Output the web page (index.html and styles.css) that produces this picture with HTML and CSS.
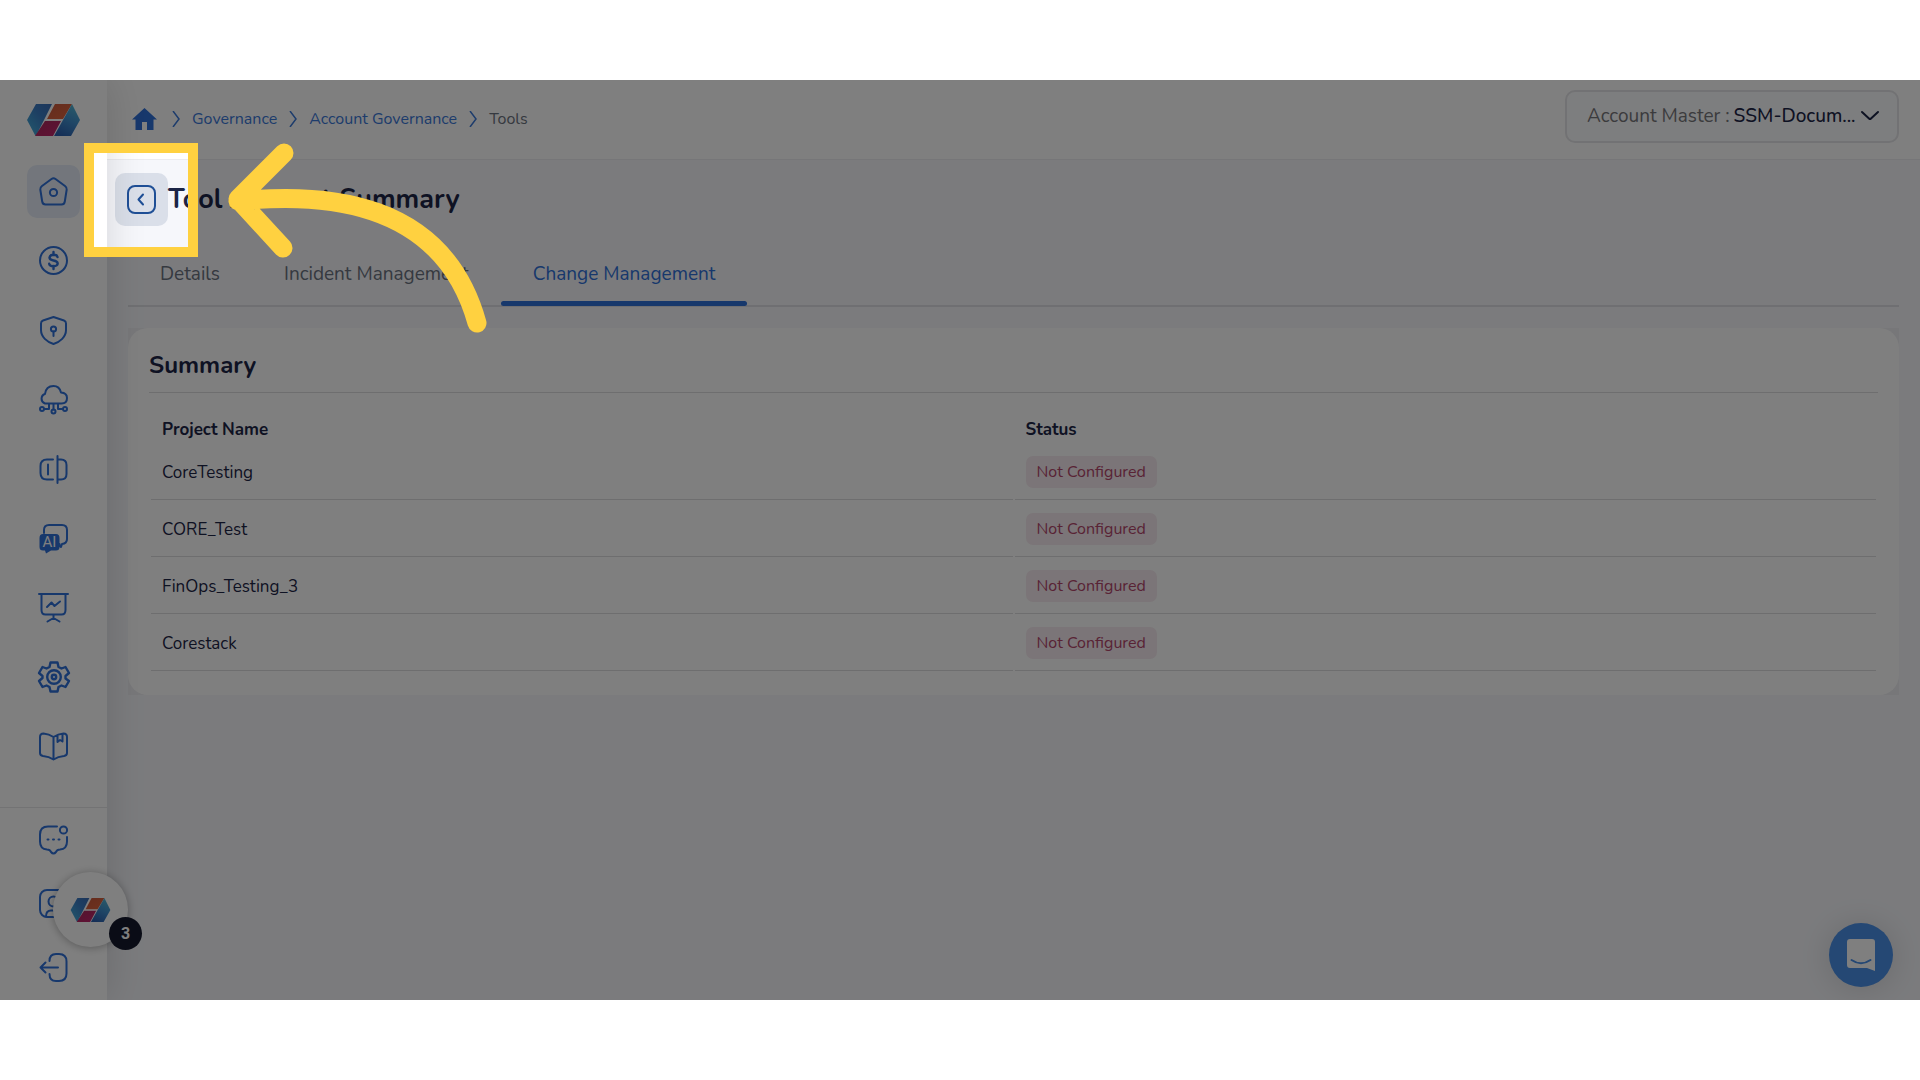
FILE: index.html
```
<!DOCTYPE html>
<html lang="en">
<head>
    <meta charset="UTF-8">
    <meta name="viewport" content="width=device-width, initial-scale=1.0">
    <title>Tool Account Summary</title>
    <link rel="stylesheet" href="styles.css">
</head>
<body>
    <!-- Shared logo -->
    <svg class="defs" width="0" height="0" aria-hidden="true">
        <defs>
            <linearGradient id="logo-left" x1="0" y1="1" x2="1" y2="0">
                <stop offset="0" stop-color="#46b4dc"/>
                <stop offset="0.6" stop-color="#3a7cc4"/>
                <stop offset="1" stop-color="#3a6cb4"/>
            </linearGradient>
            <linearGradient id="logo-right" x1="0.7" y1="0" x2="0.3" y2="1">
                <stop offset="0" stop-color="#52b4d2"/>
                <stop offset="0.5" stop-color="#3f8ccc"/>
                <stop offset="1" stop-color="#2c5fae"/>
            </linearGradient>
            <linearGradient id="logo-top" x1="0" y1="0" x2="1" y2="1">
                <stop offset="0" stop-color="#c8583c"/>
                <stop offset="1" stop-color="#e0653c"/>
            </linearGradient>
            <linearGradient id="logo-bottom" x1="0" y1="0" x2="1" y2="1">
                <stop offset="0" stop-color="#a62a5a"/>
                <stop offset="1" stop-color="#c4246e"/>
            </linearGradient>
            <symbol id="logo" viewBox="0 0 53 32">
                <path d="M9 0h16L9 32 8 31 0 16z" fill="url(#logo-left)"/>
                <path d="M28 0h17l-9 15H20z" fill="url(#logo-top)"/>
                <path d="M18 17h16l-8 15H8z" fill="url(#logo-bottom)"/>
                <path d="M45 0l8 16-9 16H27z" fill="url(#logo-right)"/>
            </symbol>
        </defs>
    </svg>

    <div class="screen">
        <aside class="sidebar">
            <a class="brand" href="#" aria-label="Home page"><svg class="logo"><use href="#logo"/></svg></a>
            <nav class="nav">
                <a class="nav-link active" href="#" aria-label="Dashboard">
                    <svg class="icon" viewBox="0 0 29 29"><path d="M12.500 2 3 9Q1 10.500 1.300 12.500L3.200 24.500Q3.700 27.500 6.500 27.500H22.500Q25.300 27.500 25.800 24.500L27.700 12.500Q28 10.500 26 9L16.500 2Q14.500 .5 12.500 2z"/><circle cx="14.500" cy="15.500" r="3.600"/></svg>
                </a>
                <a class="nav-link" href="#" aria-label="Cost">
                    <svg class="icon" viewBox="0 0 29 29"><circle cx="14.500" cy="14.500" r="13.500"/><path class="thick" d="M18.500 11Q18 8.800 14.500 8.800T10.500 11.500Q10.500 13.800 14.500 14.500T18.700 17.500Q18.500 20.200 14.500 20.200T10.200 17.800M14.500 6v3M14.500 20v3"/></svg>
                </a>
                <a class="nav-link" href="#" aria-label="Security">
                    <svg class="icon" viewBox="0 0 29 29"><path d="M14.500 1 25 4.500Q27 5.200 27 7.500V14C27 21 21 26 14.500 28C8 26 2 21 2 14V7.500Q2 5.200 4 4.500z"/><circle cx="14.500" cy="13" r="2.600"/><path d="M14.500 15.500V20"/></svg>
                </a>
                <a class="nav-link" href="#" aria-label="Cloud operations">
                    <svg class="icon" viewBox="0 0 29 29"><path d="M6 18.500A5 5 0 0 1 6 9Q7 1 14.500 1Q20.500 1 22 7.500Q28 8 28 13Q28 18.500 22.500 18.500zM10 18.500V24H5.500M19 18.500V24H23.500M14.500 18.500V24.500"/><circle cx="3" cy="24" r="2"/><circle cx="26" cy="24" r="2"/><circle cx="14.500" cy="26.500" r="2"/></svg>
                </a>
                <a class="nav-link" href="#" aria-label="Compare">
                    <svg class="icon" viewBox="0 0 29 29"><path d="M14 4.500H8Q1.500 4.500 1.500 11V18Q1.500 24.500 8 24.500H14M18.500 1V28M18.500 4.500H22Q27.500 4.500 27.500 10V19Q27.500 24.500 22 24.500H18.500M9 9.500V19.500"/></svg>
                </a>
                <a class="nav-link" href="#" aria-label="AI assistant">
                    <svg class="icon" viewBox="0 0 29 29"><path d="M5 9V6Q5 1 10 1H23Q28 1 28 6V15Q28 19.500 23 20L22 23Q20.500 22.500 20.500 20"/><path class="solid" d="M4 10H17Q20.500 10 20.500 14V23Q20.500 26.500 17 26.500H12L7 29.500 6 26.500H4Q.5 26.500 .5 23V14Q.5 10 4 10z"/><text class="ai-text" x="10.500" y="23" text-anchor="middle">AI</text></svg>
                </a>
                <a class="nav-link" href="#" aria-label="Reports">
                    <svg class="icon" viewBox="0 0 29 29"><path d="M0 1H29M2.500 1V17Q2.500 21.500 6.500 21.500H22.500Q26.500 21.500 26.500 17V1M8 14 12.500 9.500 15.500 13 21 8.500M14.500 21.500V25M8.500 28.500 14.500 25 20.500 28.500"/></svg>
                </a>
                <a class="nav-link" href="#" aria-label="Settings">
                    <svg class="icon large" viewBox="0 0 32 32"><path class="thick" d="M12.500 1.500H19.500L20.500 6 23.500 7.500 27.500 6 31 12 27.500 15V17.500L31 20 27.500 26 23.500 24.500 20.500 26 19.500 30.500H12.500L11.500 26 8.500 24.500 4.500 26 1 20 4.500 17V15L1 12 4.500 6 8.500 7.500 11.500 6z"/><circle class="thick" cx="16" cy="16" r="6.800"/><circle class="thick" cx="16" cy="16" r="2.200"/></svg>
                </a>
                <a class="nav-link" href="#" aria-label="Documentation">
                    <svg class="icon" viewBox="0 0 29 29"><path d="M14.500 5Q10 2 4.500 1.500Q1 1.500 1 5V21Q1 23.500 4 24Q10 24.500 14.500 27.500Q19 24.500 25 24Q28 23.500 28 21V5Q28 1.500 24.500 1.500Q19 2 14.500 5zV27.500M18.500 3.500V10L21 8 23.500 9.500V2"/></svg>
                </a>
            </nav>
            <div class="nav-bottom">
                <a class="nav-small" href="#" aria-label="Messages">
                    <svg class="icon" viewBox="0 0 29 29"><path d="M18 1.500H9Q1 1.500 1 9.500V16.500Q1 24 8 24.500Q11 24.500 12 27Q14.500 30 17 27Q18 24.500 21 24.500Q28 24 28 16.500V12"/><circle cx="24.500" cy="5" r="3.600"/><path d="M8.500 14.500h1M14 14.500h1M19.500 14.500h1"/></svg>
                </a>
                <a class="nav-small" href="#" aria-label="Profile">
                    <svg class="icon" viewBox="0 0 29 29"><rect x="1" y="1" width="27" height="27" rx="7"/><circle cx="14.500" cy="12.500" r="5"/><path d="M7 27.500Q7 21.500 12 21.500H17Q22 21.500 22 27.500"/></svg>
                </a>
                <a class="nav-small" href="#" aria-label="Log out">
                    <svg class="icon" viewBox="0 0 29 29"><path d="M10.500 8Q10.500 1 17 1H20Q27.500 1 27.500 8.500V20.500Q27.500 28 20 28H17Q10.500 28 10.500 21M19 14.500H1.500M6.500 9.500 1.500 14.500 6.500 19.500"/></svg>
                </a>
            </div>
        </aside>

        <div class="main">
            <header class="topbar">
                <nav class="breadcrumb" aria-label="Breadcrumb">
                    <a class="home" href="#" aria-label="Home"><svg width="25" height="22" viewBox="0 0 25 22"><path d="M12.500 0 25 11.500H21.500V22H15V14H10V22H3.500V11.500H0z"/></svg></a>
                    <svg class="chevron" viewBox="0 0 8 16"><path d="M1 0 7 8 1 16"/></svg>
                    <a href="#">Governance</a>
                    <svg class="chevron" viewBox="0 0 8 16"><path d="M1 0 7 8 1 16"/></svg>
                    <a href="#">Account Governance</a>
                    <svg class="chevron" viewBox="0 0 8 16"><path d="M1 0 7 8 1 16"/></svg>
                    <span>Tools</span>
                </nav>
                <div class="account">
                    <label for="account">Account Master :</label>
                    <select id="account">
                        <option>SSM-Docum...</option>
                    </select>
                    <svg class="caret" viewBox="0 0 16 9"><path d="M0 1 7 7.500Q8 8.500 9 7.500L16 1"/></svg>
                </div>
            </header>

            <main class="content">
                <div class="title-row">
                    <button class="back" type="button" aria-label="Back">
                        <svg class="icon" viewBox="0 0 29 29"><rect x="1" y="1" width="27" height="27" rx="7"/><path d="M16 9.500 11.500 14.500 16 19.500"/></svg>
                    </button>
                    <h1>Tool Account Summary</h1>
                </div>
                <div class="tabs" role="tablist">
                    <button class="tab" type="button" role="tab">Details</button>
                    <button class="tab" type="button" role="tab">Incident Management</button>
                    <button class="tab selected" type="button" role="tab" aria-selected="true">Change Management</button>
                </div>
                <div class="card-wrap">
                    <section class="card">
                        <h2>Summary</h2>
                        <table>
                            <thead>
                                <tr><th>Project Name</th><th>Status</th></tr>
                            </thead>
                            <tbody>
                                <tr><td>CoreTesting</td><td><span class="status">Not Configured</span></td></tr>
                                <tr><td>CORE_Test</td><td><span class="status">Not Configured</span></td></tr>
                                <tr><td>FinOps_Testing_3</td><td><span class="status">Not Configured</span></td></tr>
                                <tr><td>Corestack</td><td><span class="status">Not Configured</span></td></tr>
                            </tbody>
                        </table>
                    </section>
                </div>
            </main>
        </div>

        <!-- Floating widgets -->
        <button class="guide" type="button" aria-label="Open guide">
            <svg class="guide-logo"><use href="#logo"/></svg>
            <span class="guide-count">3</span>
        </button>
        <button class="chat" type="button" aria-label="Open chat">
            <svg width="28" height="32" viewBox="0 0 28 32"><path class="bubble" d="M3 0H25Q28 0 28 3V32L20 29H3Q0 29 0 26V3Q0 0 3 0z"/><path class="smile" d="M4.500 21Q14 27.500 23.500 21"/></svg>
        </button>

        <!-- Walkthrough highlight -->
        <div class="spotlight"></div>
        <svg class="arrow" width="270" height="200" viewBox="0 0 270 200"><path d="M64 13 18 59 63 108M18 61C105 52 223 60 257 183"/></svg>
    </div>
</body>
</html>
```
FILE: styles.css
```
* {
    box-sizing: border-box;
}
body {
    margin: 0;
    background: #fff;
    color: #1c2546;
    font-family: Nunito, Lato, "Open Sans", sans-serif;
    font-size: 16px;
}
a {
    color: #3b78d8;
    text-decoration: none;
}
button, select {
    font-family: inherit;
    border: 0;
    padding: 0;
    cursor: pointer;
}
.defs {
    position: absolute;
}
.screen {
    position: relative;
    display: flex;
    min-height: calc(100vh - 160px);
    margin: 80px 0;
    overflow: hidden;
    background: #f6f7fb;
}

/* Sidebar */
.sidebar {
    position: relative;
    z-index: 1;
    display: flex;
    flex-direction: column;
    flex: 0 0 107px;
    background: #fff;
    box-shadow: 0 0 40px rgba(0, 0, 0, 0.14);
}
.brand {
    display: flex;
    justify-content: center;
    padding: 24px 0 29px;
}
.logo {
    width: 53px;
    height: 32px;
}
.nav {
    display: flex;
    flex: 1;
    flex-direction: column;
    align-items: center;
    justify-content: space-between;
    padding-bottom: 34px;
}
.nav-link {
    display: flex;
    align-items: center;
    justify-content: center;
    width: 53px;
    height: 53px;
    border-radius: 10px;
}
.nav-link.active {
    background: #e6edf8;
}
.icon {
    width: 29px;
    height: 29px;
    overflow: visible;
    fill: none;
    stroke: #2f70d8;
    stroke-width: 2;
    stroke-linecap: round;
    stroke-linejoin: round;
}
.icon.large {
    width: 32px;
    height: 32px;
}
.icon .thick {
    stroke-width: 2.4;
}
.icon .solid {
    fill: #2f70d8;
    stroke: none;
}
.ai-text {
    fill: #fff;
    stroke: none;
    font-family: Roboto, sans-serif;
    font-size: 15px;
}
.nav-bottom {
    display: flex;
    flex-direction: column;
    align-items: center;
    height: 193px;
    padding-top: 17px;
    gap: 35px;
    border-top: 1px solid #e6e6e8;
}
.nav-small {
    height: 29px;
}

/* Top bar */
.main {
    flex: 1;
    min-width: 0;
}
.topbar {
    display: flex;
    align-items: flex-start;
    justify-content: space-between;
    height: 80px;
    padding: 10px 21px 0 25px;
    background: #fff;
    border-bottom: 1px solid #ececf0;
}
.breadcrumb {
    display: flex;
    align-items: center;
    height: 58px;
    gap: 12px;
}
.breadcrumb span {
    color: #6b7280;
}
.home {
    display: flex;
    margin-right: 3px;
    fill: #2f70d8;
}
.chevron {
    width: 8px;
    height: 16px;
    fill: none;
    stroke: #3b78d8;
    stroke-width: 1.5;
}
.account {
    display: flex;
    align-items: center;
    width: 334px;
    height: 53px;
    padding: 0 19px 2px 20px;
    border: 2px solid #e4e5e8;
    border-radius: 10px;
    background: #fbfcfe;
    color: #77777a;
    font-size: 19px;
}
.account select {
    flex: 1;
    min-width: 0;
    margin-left: 4px;
    appearance: none;
    background: none;
    color: #1c2546;
    font-size: 19px;
    font-weight: 500;
}
.caret {
    width: 16px;
    height: 9px;
    overflow: visible;
    fill: none;
    stroke: #1c2546;
    stroke-width: 2;
    stroke-linecap: round;
}

/* Page content */
.content {
    padding: 13px 21px 0;
}
.title-row {
    display: flex;
    align-items: center;
    margin-left: -13px;
}
.back {
    display: flex;
    align-items: center;
    justify-content: center;
    width: 53px;
    height: 53px;
    border-radius: 10px;
    background: #dadfe9;
}
.back .icon {
    stroke: #1f4f96;
}
h1 {
    margin: 0;
    font-size: 27px;
    font-weight: 700;
    line-height: 36px;
}
.tabs {
    display: flex;
    margin-top: 19px;
    border-bottom: 2px solid #dedfe4;
}
.tab {
    height: 61px;
    margin-bottom: -1px;
    padding: 2px 32px 0;
    border-bottom: 5px solid transparent;
    background: none;
    color: #6b7280;
    font-size: 19px;
}
.tab.selected {
    position: relative;
    color: #2f70d8;
}
.tab.selected::after {
    content: "";
    position: absolute;
    right: 0;
    bottom: -5px;
    left: 0;
    height: 5px;
    border-radius: 3px;
    background: #2f70d8;
}
.card-wrap {
    margin-top: 21px;
    background: #efeff3;
}
.card {
    padding: 21px 21px 22px;
    border-radius: 20px;
    background: #fff;
}
h2 {
    margin: 0;
    padding-bottom: 11px;
    border-bottom: 1px solid #dcdcde;
    font-size: 24px;
    line-height: 32px;
}
table {
    width: 100%;
    margin-top: 21px;
    border-spacing: 2px;
    table-layout: fixed;
    font-size: 17px;
}
th {
    height: 27px;
    padding: 0 11px;
    text-align: left;
}
td {
    height: 55px;
    padding: 0 11px;
    border-bottom: 1px solid #dcdcde;
}
.status {
    display: inline-block;
    padding: 0 11px;
    border-radius: 7px;
    background: #f6ebf0;
    color: #b3466b;
    font-size: 16px;
    line-height: 32px;
}

/* Floating widgets */
.guide {
    position: absolute;
    z-index: 2;
    left: 53px;
    bottom: 53px;
    display: flex;
    align-items: center;
    justify-content: center;
    width: 75px;
    height: 75px;
    border-radius: 50%;
    background: #fff;
    box-shadow: 0 1px 8px rgba(0, 0, 0, 0.3);
}
.guide-logo {
    width: 41px;
    height: 24px;
}
.guide-count {
    position: absolute;
    right: -14px;
    bottom: -3px;
    width: 33px;
    border-radius: 50%;
    background: #14182c;
    color: #fff;
    font-family: Roboto, sans-serif;
    font-size: 16px;
    font-weight: 700;
    line-height: 33px;
}
.chat {
    position: absolute;
    z-index: 2;
    right: 27px;
    bottom: 13px;
    display: flex;
    align-items: center;
    justify-content: center;
    width: 64px;
    height: 64px;
    border-radius: 50%;
    background: #4a90e8;
    box-shadow: 0 2px 32px rgba(0, 0, 0, 0.14);
}
.bubble {
    fill: #fff;
}
.smile {
    fill: none;
    stroke: #4a90e8;
    stroke-width: 2;
    stroke-linecap: round;
}

/* Walkthrough highlight, its shadow dims the rest of the screen */
.spotlight {
    position: absolute;
    z-index: 3;
    top: 63px;
    left: 84px;
    width: 114px;
    height: 114px;
    border: 10px solid #ffd140;
    box-shadow: 0 0 0 4000px rgba(0, 0, 0, 0.5);
}
.arrow {
    position: absolute;
    z-index: 4;
    top: 60px;
    left: 220px;
    fill: none;
    stroke: #ffd140;
    stroke-width: 19;
    stroke-linecap: round;
    stroke-linejoin: round;
}
```
